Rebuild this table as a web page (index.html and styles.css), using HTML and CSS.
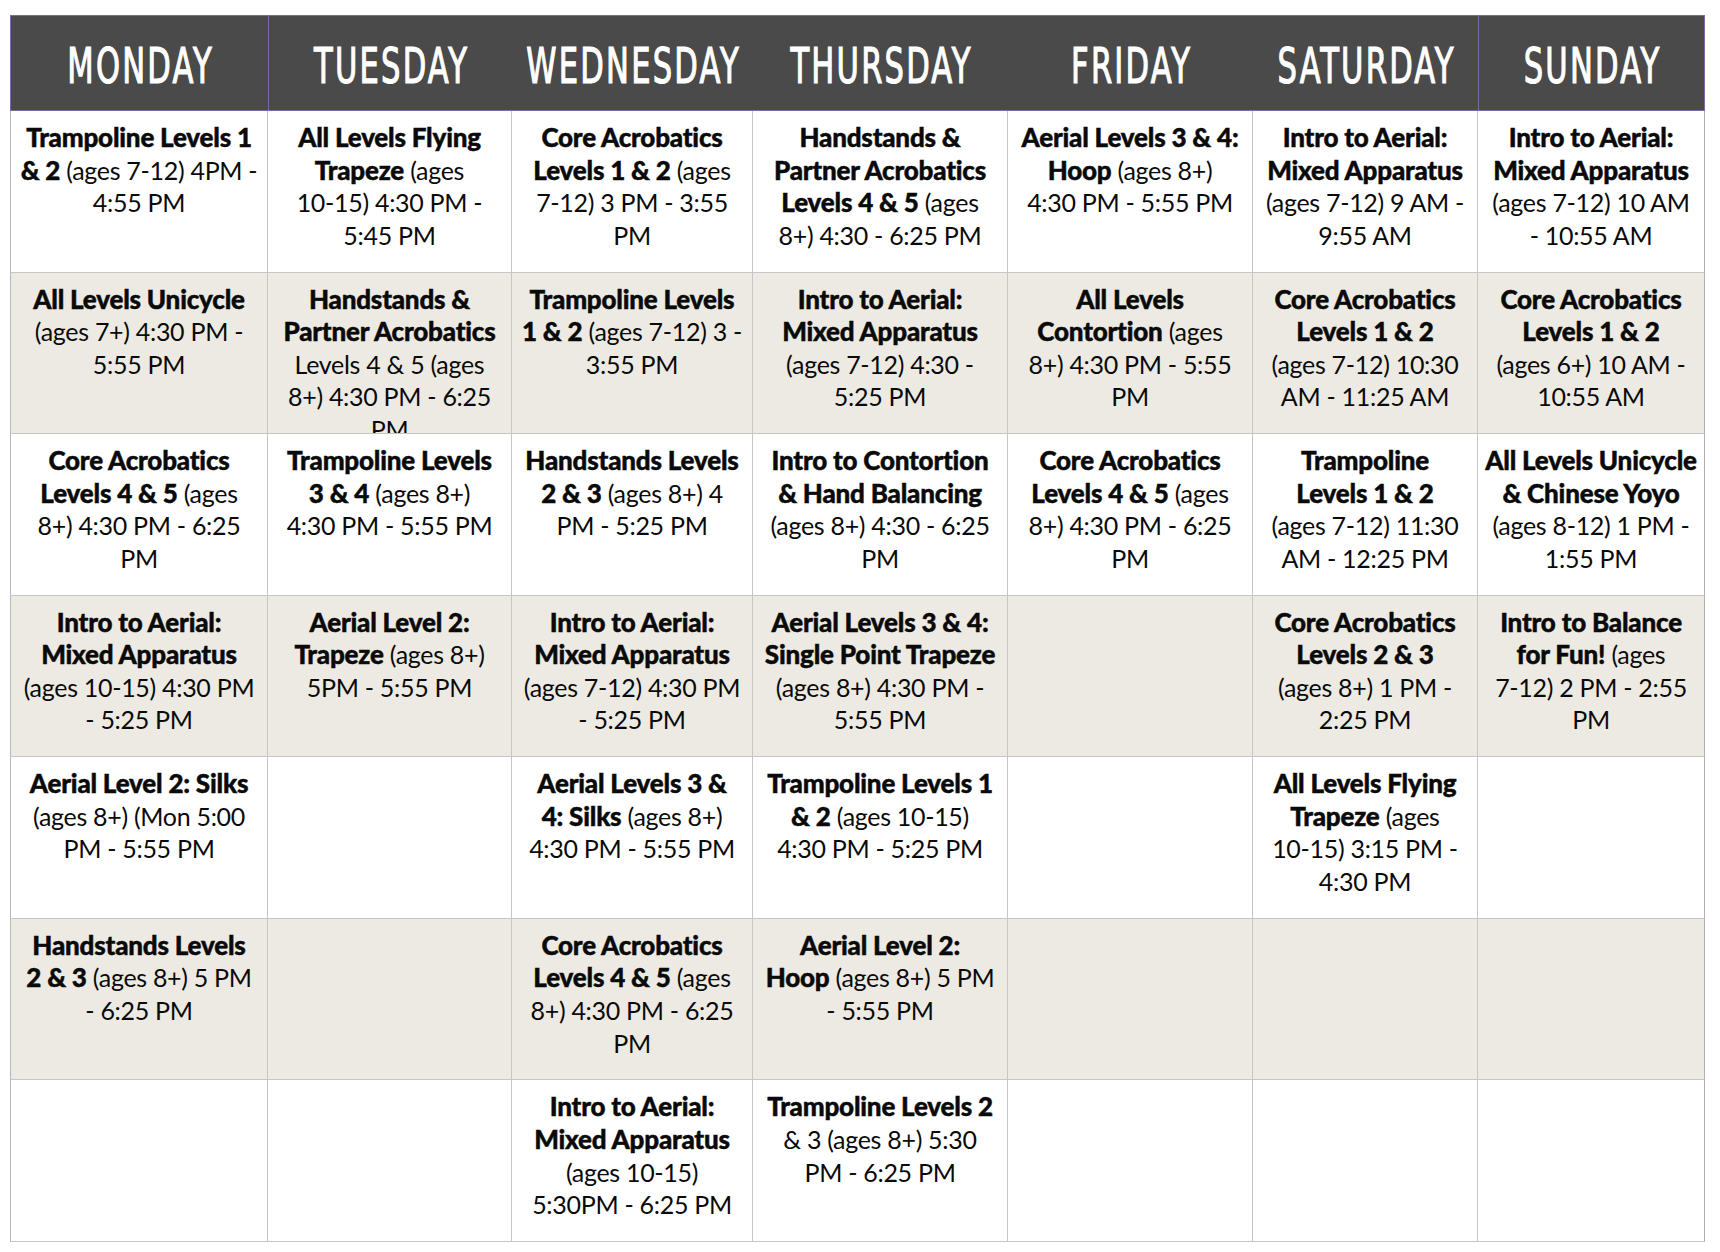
FILE: index.html
```html
<!DOCTYPE html>
<html lang="en">
<head>
<meta charset="utf-8">
<title>Class Schedule</title>
<link rel="stylesheet" href="styles.css">
</head>
<body>
<div class="schedule">
  <div class="day first"><span>MONDAY</span></div>
  <div class="day divider"><span>TUESDAY</span></div>
  <div class="day"><span>WEDNESDAY</span></div>
  <div class="day"><span>THURSDAY</span></div>
  <div class="day"><span>FRIDAY</span></div>
  <div class="day"><span>SATURDAY</span></div>
  <div class="day divider last"><span>SUNDAY</span></div>

  <div class="cell first"><b>Trampoline Levels 1</b><br><b>&amp; 2</b> (ages 7-12) 4PM -<br>4:55 PM</div>
  <div class="cell"><b>All Levels Flying</b><br><b>Trapeze</b> (ages<br>10-15) 4:30 PM -<br>5:45 PM</div>
  <div class="cell"><b>Core Acrobatics</b><br><b>Levels 1 &amp; 2</b> (ages<br>7-12) 3 PM - 3:55<br>PM</div>
  <div class="cell"><b>Handstands &amp;</b><br><b>Partner Acrobatics</b><br><b>Levels 4 &amp; 5</b> (ages<br>8+) 4:30 - 6:25 PM</div>
  <div class="cell"><b>Aerial Levels 3 &amp; 4:</b><br><b>Hoop</b> (ages 8+)<br>4:30 PM - 5:55 PM</div>
  <div class="cell"><b>Intro to Aerial:</b><br><b>Mixed Apparatus</b><br>(ages 7-12) 9 AM -<br>9:55 AM</div>
  <div class="cell"><b>Intro to Aerial:</b><br><b>Mixed Apparatus</b><br>(ages 7-12) 10 AM<br>- 10:55 AM</div>

  <div class="cell alt first"><b>All Levels Unicycle</b><br>(ages 7+) 4:30 PM -<br>5:55 PM</div>
  <div class="cell alt"><b>Handstands &amp;</b><br><b>Partner Acrobatics</b><br>Levels 4 &amp; 5 (ages<br>8+) 4:30 PM - 6:25<br>PM</div>
  <div class="cell alt"><b>Trampoline Levels</b><br><b>1 &amp; 2</b> (ages 7-12) 3 -<br>3:55 PM</div>
  <div class="cell alt"><b>Intro to Aerial:</b><br><b>Mixed Apparatus</b><br>(ages 7-12) 4:30 -<br>5:25 PM</div>
  <div class="cell alt"><b>All Levels</b><br><b>Contortion</b> (ages<br>8+) 4:30 PM - 5:55<br>PM</div>
  <div class="cell alt"><b>Core Acrobatics</b><br><b>Levels 1 &amp; 2</b><br>(ages 7-12) 10:30<br>AM - 11:25 AM</div>
  <div class="cell alt"><b>Core Acrobatics</b><br><b>Levels 1 &amp; 2</b><br>(ages 6+) 10 AM -<br>10:55 AM</div>

  <div class="cell first"><b>Core Acrobatics</b><br><b>Levels 4 &amp; 5</b> (ages<br>8+) 4:30 PM - 6:25<br>PM</div>
  <div class="cell"><b>Trampoline Levels</b><br><b>3 &amp; 4</b> (ages 8+)<br>4:30 PM - 5:55 PM</div>
  <div class="cell"><b>Handstands Levels</b><br><b>2 &amp; 3</b> (ages 8+) 4<br>PM - 5:25 PM</div>
  <div class="cell"><b>Intro to Contortion</b><br><b>&amp; Hand Balancing</b><br>(ages 8+) 4:30 - 6:25<br>PM</div>
  <div class="cell"><b>Core Acrobatics</b><br><b>Levels 4 &amp; 5</b> (ages<br>8+) 4:30 PM - 6:25<br>PM</div>
  <div class="cell"><b>Trampoline</b><br><b>Levels 1 &amp; 2</b><br>(ages 7-12) 11:30<br>AM - 12:25 PM</div>
  <div class="cell"><b>All Levels Unicycle</b><br><b>&amp; Chinese Yoyo</b><br>(ages 8-12) 1 PM -<br>1:55 PM</div>

  <div class="cell alt first"><b>Intro to Aerial:</b><br><b>Mixed Apparatus</b><br>(ages 10-15) 4:30 PM<br>- 5:25 PM</div>
  <div class="cell alt"><b>Aerial Level 2:</b><br><b>Trapeze</b> (ages 8+)<br>5PM - 5:55 PM</div>
  <div class="cell alt"><b>Intro to Aerial:</b><br><b>Mixed Apparatus</b><br>(ages 7-12) 4:30 PM<br>- 5:25 PM</div>
  <div class="cell alt"><b>Aerial Levels 3 &amp; 4:</b><br><b>Single Point Trapeze</b><br>(ages 8+) 4:30 PM -<br>5:55 PM</div>
  <div class="cell alt"></div>
  <div class="cell alt"><b>Core Acrobatics</b><br><b>Levels 2 &amp; 3</b><br>(ages 8+) 1 PM -<br>2:25 PM</div>
  <div class="cell alt"><b>Intro to Balance</b><br><b>for Fun!</b> (ages<br>7-12) 2 PM - 2:55<br>PM</div>

  <div class="cell first"><b>Aerial Level 2: Silks</b><br>(ages 8+) (Mon 5:00<br>PM - 5:55 PM</div>
  <div class="cell"></div>
  <div class="cell"><b>Aerial Levels 3 &amp;</b><br><b>4: Silks</b> (ages 8+)<br>4:30 PM - 5:55 PM</div>
  <div class="cell"><b>Trampoline Levels 1</b><br><b>&amp; 2</b> (ages 10-15)<br>4:30 PM - 5:25 PM</div>
  <div class="cell"></div>
  <div class="cell"><b>All Levels Flying</b><br><b>Trapeze</b> (ages<br>10-15) 3:15 PM -<br>4:30 PM</div>
  <div class="cell"></div>

  <div class="cell alt first"><b>Handstands Levels</b><br><b>2 &amp; 3</b> (ages 8+) 5 PM<br>- 6:25 PM</div>
  <div class="cell alt"></div>
  <div class="cell alt"><b>Core Acrobatics</b><br><b>Levels 4 &amp; 5</b> (ages<br>8+) 4:30 PM - 6:25<br>PM</div>
  <div class="cell alt"><b>Aerial Level 2:</b><br><b>Hoop</b> (ages 8+) 5 PM<br>- 5:55 PM</div>
  <div class="cell alt"></div>
  <div class="cell alt"></div>
  <div class="cell alt"></div>

  <div class="cell first"></div>
  <div class="cell"></div>
  <div class="cell"><b>Intro to Aerial:</b><br><b>Mixed Apparatus</b><br>(ages 10-15)<br>5:30PM - 6:25 PM</div>
  <div class="cell"><b>Trampoline Levels 2</b><br>&amp; 3 (ages 8+) 5:30<br>PM - 6:25 PM</div>
  <div class="cell"></div>
  <div class="cell"></div>
  <div class="cell"></div>
</div>
</body>
</html>
```

FILE: styles.css
```css
html, body {
  margin: 0;
  padding: 0;
  background: #ffffff;
}

body {
  font-family: Lato, "Noto Sans", "Liberation Sans", sans-serif;
  color: #0a0a0a;
}

.schedule {
  margin: 15px 0 0 10px;
  display: grid;
  grid-template-columns: 258px 244px 241px 255px 245px 225px 227px;
  grid-template-rows: 96px repeat(7, 161.57px);
  width: 1695px;
}

.day {
  box-sizing: border-box;
  background: #4a4a4a;
  border-top: 1px solid #7d6aa3;
  border-bottom: 1px solid #7d6aa3;
  display: flex;
  align-items: center;
  justify-content: center;
  color: #ffffff;
  overflow: hidden;
}

.day span {
  display: inline-block;
  font-family: "Liberation Sans Narrow", "DejaVu Sans Condensed", sans-serif;
  font-size: 34px;
  letter-spacing: 2.2px;
  margin-right: -2.2px;
  transform: scaleY(1.44);
  -webkit-text-stroke: 0.8px #ffffff;
  line-height: 1;
  padding-top: 3px;
}

.day.first {
  border-left: 1px solid #7d6aa3;
}

.day.divider {
  border-left: 1px solid #7d6aa3;
}

.day.last {
  border-right: 1px solid #7d6aa3;
}

.cell {
  box-sizing: border-box;
  border-right: 1px solid #c6c6c6;
  border-bottom: 1px solid #c6c6c6;
  padding: 10px 2px 0;
  text-align: center;
  font-size: 25px;
  letter-spacing: -0.3px;
  line-height: 32.6px;
  white-space: nowrap;
  overflow: hidden;
  background: #ffffff;
}

.cell b {
  font-size: 26px;
  letter-spacing: -0.2px;
  font-weight: 900;
  -webkit-text-stroke: 0.45px #0a0a0a;
}

.cell.first {
  border-left: 1px solid #b8b8b8;
}

.cell.alt {
  background: #edeae3;
}

.schedule > .cell:nth-child(7n) {
  border-right-color: #b0b0b0;
}
```
